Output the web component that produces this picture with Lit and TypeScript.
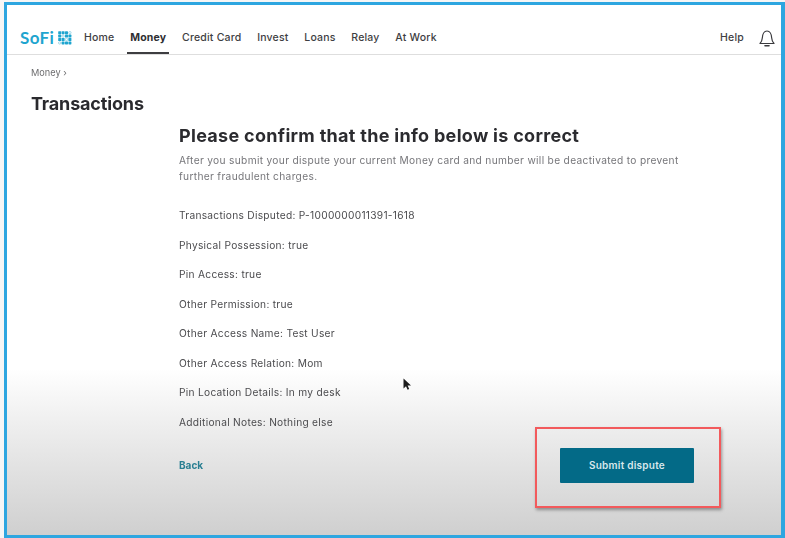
import { LitElement, html, css, svg } from "lit";
import { customElement } from "lit/decorators.js";

const NAV = ["Home", "Money", "Credit Card", "Invest", "Loans", "Relay", "At Work"];
const ROWS = [
  "Transactions Disputed: P-1000000011391-1618",
  "Physical Possession: true",
  "Pin Access: true",
  "Other Permission: true",
  "Other Access Name: Test User",
  "Other Access Relation: Mom",
  "Pin Location Details: In my desk",
  "Additional Notes: Nothing else",
];

const dots: [number, number, number][] = [];
for (let r = 0; r < 4; r++) {
  for (let c = 0; c < 4; c++) {
    const light = (r === 0 && c === 3) || (r === 1 && c === 1) || (r === 2 && c === 2) || (r === 3 && c === 0);
    dots.push([c * 3.4 + 0.2, r * 3.4 + 0.2, light ? 0 : 1]);
  }
}

@customElement("app-root")
export class AppRoot extends LitElement {
  static styles = css`
    :host {
      display: block;
      width: 785px;
      height: 538px;
      box-sizing: border-box;
      padding: 2px 0 0 4px;
      background: #f6f6f6;
      font-family: "Inter", "Liberation Sans", sans-serif;
      overflow: hidden;
    }
    .frame {
      position: relative;
      box-sizing: border-box;
      width: 781px;
      height: 536px;
      border: 3px solid #2ea6e0;
      border-right-width: 4px;
      background: linear-gradient(180deg, #fff 0, #fff 364px, #f1f1f1 410px, #cfcfcf 531px);
      overflow: hidden;
    }
    .blur {
      filter: blur(0.35px);
    }
    header {
      box-sizing: border-box;
      height: 50px;
      padding-top: 24px;
      border-bottom: 1px solid #dedede;
      display: flex;
      align-items: flex-start;
      padding-left: 13px;
      background: #fff;
    }
    .logo {
      display: flex;
      align-items: center;
      gap: 4px;
      width: 64px;
      height: 18px;
      color: #1fa5cf;
      font: 700 17px/18px "Lato", sans-serif;
      letter-spacing: 0.4px;
    }
    .logo svg {
      display: block;
    }
    nav {
      display: flex;
      gap: 15.7px;
    }
    .item {
      position: relative;
      height: 25px;
      font-size: 10.5px;
      line-height: 18px;
      font-weight: 500;
      letter-spacing: 0.2px;
      color: #3e3e42;
    }
    .item.active {
      font-weight: 700;
      color: #2e2e32;
    }
    .item.active::after {
      content: "";
      position: absolute;
      left: -3px;
      right: -3px;
      bottom: 0;
      height: 2px;
      background: #3d3d40;
    }
    .spacer {
      flex: 1;
    }
    .help {
      font-size: 10.5px;
      line-height: 18px;
      font-weight: 500;
      letter-spacing: 0.2px;
      color: #3e3e42;
      margin-right: 15px;
    }
    .bell {
      margin: 0 6px 0 0;
      display: block;
    }
    main {
      padding: 0 0 0 24px;
    }
    .crumb {
      margin-top: 11px;
      font-size: 9.2px;
      line-height: 13px;
      color: #6e6e70;
    }
    h1 {
      margin: 14px 0 0;
      font-size: 18px;
      line-height: 22px;
      font-weight: 700;
      letter-spacing: -0.15px;
      color: #2a2a2e;
    }
    .content {
      margin: 10px 0 0 148px;
      width: 515px;
    }
    h2 {
      margin: 0;
      font-size: 18px;
      line-height: 22px;
      font-weight: 700;
      letter-spacing: 0.3px;
      color: #2b2b2f;
    }
    .lead {
      margin: 5px 0 0;
      font-size: 10.2px;
      line-height: 16px;
      letter-spacing: 0.32px;
      color: #76767a;
    }
    .rows {
      margin-top: 25px;
      display: flex;
      flex-direction: column;
      gap: 16.5px;
    }
    .rows div {
      font-size: 10.2px;
      line-height: 13px;
      letter-spacing: 0.28px;
      color: #4b4b4e;
    }
    .actions {
      margin-top: 19px;
      display: flex;
      justify-content: space-between;
      align-items: center;
    }
    .back {
      font-size: 10px;
      font-weight: 700;
      color: #2a7f92;
    }
    .btn-wrap {
      position: relative;
    }
    .btn {
      box-sizing: border-box;
      width: 134px;
      height: 35px;
      border: 0;
      border-radius: 1px;
      background: #036a87;
      color: #d8e8ec;
      font: 600 10px/35px "Inter", sans-serif;
      letter-spacing: 0.25px;
      display: block;
      padding: 0;
    }
    .mark {
      position: absolute;
      left: -25px;
      top: -21px;
      width: 186px;
      height: 81px;
      box-sizing: border-box;
      border: 2px solid #f25a5c;
      box-shadow: 1px 2px 3px rgba(0, 0, 0, 0.35);
    }
    .cursor {
      position: absolute;
      left: 396px;
      top: 373px;
      display: block;
    }
  `;

  render() {
    return html`
      <div class="frame">
        <div class="blur">
          <header>
            <div class="logo">
              <span>SoFi</span>
              <svg width="14" height="14" viewBox="0 0 14 14" aria-hidden="true">
                ${dots.map(([x, y, on]) =>
                  on
                    ? svg`<rect x=${x} y=${y} width="3" height="3" rx="0.6" fill="#1fa5cf"></rect>`
                    : svg`<circle cx=${x + 1.5} cy=${y + 1.5} r="1.2" fill="none" stroke="#7cc8e0" stroke-width="0.7"></circle>`
                )}
              </svg>
            </div>
            <nav>
              ${NAV.map((n) => html`<div class="item ${n === "Money" ? "active" : ""}">${n}</div>`)}
            </nav>
            <div class="spacer"></div>
            <div class="help">Help</div>
            <svg class="bell" width="16" height="19" viewBox="0 0 16 19" fill="none" stroke="#3a3a3e" stroke-width="1.2" aria-hidden="true">
              <path d="M1 14.500c1.600-1.600 2.100-3 2.300-5.500.2-3.600 1.900-7 4.700-7s4.500 3.400 4.700 7c.2 2.500.7 3.900 2.300 5.500z" stroke-linejoin="round"></path>
              <path d="M6 16.700h4" stroke-width="1.600" stroke-linecap="round"></path>
            </svg>
          </header>
          <main>
            <div class="crumb">Money ›</div>
            <h1>Transactions</h1>
            <div class="content">
              <h2>Please confirm that the info below is correct</h2>
              <p class="lead">
                After you submit your dispute your current Money card and number will be deactivated to prevent<br />further fraudulent charges.
              </p>
              <div class="rows">${ROWS.map((r) => html`<div>${r}</div>`)}</div>
              <div class="actions">
                <span class="back">Back</span>
                <div class="btn-wrap">
                  <button class="btn">Submit dispute</button>
                  <span class="mark"></span>
                </div>
              </div>
            </div>
          </main>
        </div>
        <svg class="cursor" width="9" height="13" viewBox="0 0 9 13" aria-hidden="true">
          <path d="M0.500 0.500v10l2.500-2.300 1.600 3.600 1.600-.7-1.600-3.500h3.400z" fill="#1c1c1c"></path>
        </svg>
      </div>
    `;
  }
}
